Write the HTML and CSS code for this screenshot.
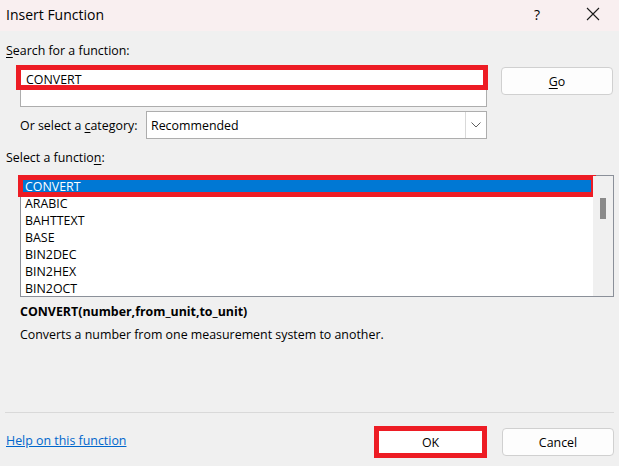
FILE: index.html
```html
<!DOCTYPE html>
<html lang="en">
<head>
    <meta charset="UTF-8">
    <title>Insert Function</title>
    <link rel="stylesheet" href="styles.css">
</head>
<body>

<div class="dialog">
    <div class="titlebar">
        <span class="title">Insert Function</span>
        <span class="help-btn">?</span>
        <span class="close-btn">
            <svg width="14" height="14" viewBox="0 0 14 14"><path d="M1 1L13 13M13 1L1 13" stroke="#1a1a1a" stroke-width="1.1" fill="none"/></svg>
        </span>
    </div>

    <div class="content">
        <div class="label"><u>S</u>earch for a function:</div>

        <div class="search-row">
            <div class="search-box">
                <div class="search-text">CONVERT</div>
                <div class="mark mark-search"></div>
            </div>
            <button class="btn go-btn"><u>G</u>o</button>
        </div>

        <div class="category-row">
            <span class="category-label">Or select a <u>c</u>ategory:</span>
            <div class="select">
                <span class="select-value">Recommended</span>
                <span class="select-arrow">
                    <svg width="10" height="6" viewBox="0 0 10 6"><path d="M0.5 0.5L5 5L9.5 0.5" stroke="#606060" stroke-width="1" fill="none"/></svg>
                </span>
            </div>
        </div>

        <div class="label fn-label">Select a functio<u>n</u>:</div>

        <div class="list">
            <div class="list-items">
                <div class="item selected">CONVERT</div>
                <div class="item">ARABIC</div>
                <div class="item">BAHTTEXT</div>
                <div class="item">BASE</div>
                <div class="item">BIN2DEC</div>
                <div class="item">BIN2HEX</div>
                <div class="item">BIN2OCT</div>
                <div class="mark mark-item"></div>
            </div>
            <div class="scrollbar"><div class="thumb"></div></div>
        </div>

        <div class="signature">CONVERT(number,from_unit,to_unit)</div>
        <div class="description">Converts a number from one measurement system to another.</div>
    </div>

    <div class="footer">
        <a class="help-link" href="#">Help on this function</a>
        <div class="buttons">
            <div class="ok-wrap">
                <button class="btn ok-btn">OK</button>
            </div>
            <button class="btn cancel-btn">Cancel</button>
        </div>
    </div>
</div>

</body>
</html>
```

FILE: styles.css
```css
body {
    margin: 0;
    font-family: "Open Sans", "Noto Sans", sans-serif;
    font-size: 12.4px;
    color: #000;
    background-color: #f0f0f0;
}
u {
    text-decoration-thickness: 1px;
    text-underline-offset: 2px;
}
.dialog {
    width: 619px;
    height: 466px;
    background-color: #f0f0f0;
    display: flex;
    flex-direction: column;
}
.titlebar {
    height: 31px;
    background-color: #f9eff0;
    display: flex;
    align-items: center;
    padding-left: 6px;
    padding-bottom: 3px;
    box-sizing: border-box;
}
.title {
    font-size: 14px;
    flex: 1;
}
.help-btn {
    width: 48px;
    text-align: center;
    font-size: 14px;
    margin-right: 9px;
}
.close-btn {
    width: 46px;
    display: flex;
    justify-content: center;
    margin-right: 3px;
}
.content {
    padding: 0 5px 0 6px;
    flex: 1;
}
.label {
    margin-top: 12px;
    height: 16px;
    line-height: 16px;
}
.search-row {
    display: flex;
    align-items: flex-start;
    margin-top: 9px;
    padding-left: 14px;
}
.search-box {
    position: relative;
    width: 465px;
    height: 37px;
    background-color: #fff;
    border: 1px solid #adadad;
    border-top-color: #fff;
}
.search-text {
    padding: 3px 0 0 5px;
    line-height: 16px;
}
.mark {
    position: absolute;
    border: 5px solid #ed1c24;
    pointer-events: none;
}
.mark-search {
    left: -5px;
    top: -4px;
    width: 462px;
    height: 15px;
}
.btn {
    font-family: inherit;
    font-size: 12.4px;
    color: #000;
    background-color: #fdfdfd;
    border: 1px solid #d0d0d0;
    border-radius: 4px;
    padding: 0;
}
.go-btn {
    width: 112px;
    height: 28px;
    margin-left: 14px;
    margin-top: -1px;
}
.category-row {
    display: flex;
    align-items: center;
    margin-top: 4px;
    padding-left: 14px;
}
.category-label {
    width: 126px;
}
.select {
    width: 339px;
    height: 26px;
    background-color: #fff;
    border: 1px solid #adadad;
    display: flex;
    align-items: center;
}
.select-value {
    flex: 1;
    padding-left: 4px;
}
.select-arrow {
    width: 20px;
    height: 26px;
    border-left: 1px solid #d9d9d9;
    display: flex;
    align-items: center;
    justify-content: center;
}
.fn-label {
    margin-top: 11px;
}
.list {
    margin-top: 9px;
    margin-left: 14px;
    height: 120px;
    border: 1px solid #8b9099;
    background-color: #fff;
    display: flex;
}
.list-items {
    position: relative;
    flex: 1;
    padding: 2px 1px 0 1px;
}
.item {
    height: 17px;
    line-height: 17px;
    padding-left: 3px;
}
.item.selected {
    background-color: #0078d4;
    color: #fff;
}
.mark-item {
    left: -3px;
    top: -1px;
    width: 568px;
    height: 12px;
}
.scrollbar {
    width: 20px;
    background-color: #f0f0f0;
    position: relative;
}
.thumb {
    position: absolute;
    left: 7px;
    top: 22px;
    width: 6px;
    height: 21px;
    background-color: #8a8a8a;
}
.signature {
    font-weight: bold;
    margin-top: 7px;
    padding-left: 14px;
    line-height: 16px;
}
.description {
    margin-top: 7px;
    padding-left: 14px;
    line-height: 16px;
}
.footer {
    margin: 0 5px 0 5px;
    border-top: 1px solid #d9d9d9;
    height: 53px;
    display: flex;
    align-items: center;
    justify-content: space-between;
}
.help-link {
    color: #0066cc;
    margin-left: 1px;
    margin-top: 2px;
}
.buttons {
    display: flex;
    align-items: center;
    margin-top: 5px;
}
.ok-wrap {
    border: 5px solid #ed1c24;
    background-color: #fff;
}
.ok-btn {
    width: 103px;
    height: 22px;
    border: none;
    border-radius: 0;
    background-color: #fff;
}
.cancel-btn {
    width: 112px;
    height: 28px;
    margin-left: 15px;
}
```
